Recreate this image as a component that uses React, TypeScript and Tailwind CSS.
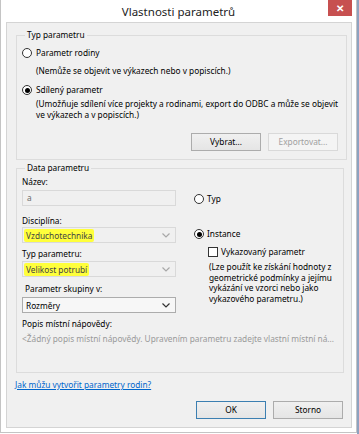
const Radio = ({ checked }: { checked?: boolean }) => (
  <span className="w-[10px] h-[10px] shrink-0 rounded-full border border-[#333] bg-white flex items-center justify-center">
    {checked && <span className="w-[5px] h-[5px] rounded-full bg-black" />}
  </span>
);

const Chevron = ({ color }: { color: string }) => (
  <svg width="8" height="5" viewBox="0 0 8 5" className="shrink-0">
    <path d="M0.5 0.5 L4 4 L7.5 0.5" fill="none" stroke={color} strokeWidth="1.2" />
  </svg>
);

const Select = ({ value, enabled, marked }: { value: string; enabled?: boolean; marked?: boolean }) => (
  <div
    className={`h-[16px] flex items-center justify-between pl-[1px] pr-[5px] border ${
      enabled ? "border-[#acacac] bg-[#f7f7f7] text-black" : "border-[#d9d9d9] bg-[#f0f0f0] text-[#444]"
    }`}
  >
    <span className={`leading-[13px] px-[2px] ${marked ? "bg-[#ffff3b] rounded-[2px]" : ""}`}>{value}</span>
    <Chevron color={enabled ? "#333" : "#a8a8a8"} />
  </div>
);

const Button = ({ label, disabled, primary }: { label: string; disabled?: boolean; primary?: boolean }) => (
  <div
    className={`w-[70px] h-[18px] flex items-center justify-center border ${
      disabled
        ? "border-[#d9d9d9] bg-[#f4f4f4] text-[#a0a0a0]"
        : primary
        ? "border-[#3c7fb1] bg-gradient-to-b from-[#f0f0f0] to-[#e5e5e5] text-black"
        : "border-[#acacac] bg-gradient-to-b from-[#f0f0f0] to-[#e5e5e5] text-black"
    }`}
  >
    {label}
  </div>
);

export default function App() {
  return (
    <div className="w-[359px] h-[434px] flex bg-white overflow-hidden font-['Noto_Sans',sans-serif] text-[8.3px] text-black">
      <div className="w-[357px] h-[433px] border-l border-r border-b border-[#c4c4c4] flex flex-col">
        {/* title bar */}
        <div className="relative h-[22px] flex items-center justify-center">
          <span className="text-[11.5px] leading-[14px] text-[#222] pt-[1px]">Vlastnosti parametrů</span>
          <div className="absolute right-[4px] top-0 w-[24px] h-[16px] bg-[#c75050] flex items-center justify-center text-white text-[10px] font-bold leading-none">
            ✕
          </div>
        </div>

        {/* client area */}
        <div className="ml-[5px] w-[346px] h-[406px] border border-[#d4d4d4] bg-[#f0f0f0] flex flex-col">
          <fieldset className="mt-[6px] ml-[9px] w-[328px] border border-[#dcdcdc] pl-[5px] pr-[8px] pb-[8px]">
            <legend className="ml-[3px] px-[2px] leading-[12px]">Typ parametru</legend>
            <div className="mt-[5px] h-[14px] flex items-center gap-[4px]">
              <Radio />
              <span>Parametr rodiny</span>
            </div>
            <div className="mt-[4px] h-[14px] flex items-center pl-[14px]">
              (Nemůže se objevit ve výkazech nebo v popiscích.)
            </div>
            <div className="mt-[5px] h-[14px] flex items-center gap-[4px]">
              <Radio checked />
              <span>Sdílený parametr</span>
            </div>
            <p className="mt-[1px] pl-[14px] leading-[11px] whitespace-nowrap">
              (Umožňuje sdílení více projekty a rodinami, export do ODBC a může se objevit
              <br />
              ve výkazech a v popiscích.)
            </p>
            <div className="mt-[13px] flex justify-end gap-[7px]">
              <Button label="Vybrat..." />
              <Button label="Exportovat..." disabled />
            </div>
          </fieldset>

          <fieldset className="mt-[2px] ml-[9px] w-[328px] border border-[#dcdcdc] pl-[5px] pr-[8px] pb-[27px]">
            <legend className="ml-[3px] px-[2px] leading-[12px]">Data parametru</legend>
            <div className="flex gap-[18px]">
              <div className="w-[154px] flex flex-col">
                <div className="mt-[2px] leading-[12px]">Název:</div>
                <div className="mt-[2px] h-[16px] border border-[#d9d9d9] bg-[#f0f0f0] text-[#6d6d6d] flex items-center pl-[4px]">
                  a
                </div>
                <div className="mt-[9px] leading-[12px]">Disciplína:</div>
                <Select value="Vzduchotechnika" marked />
                <div className="mt-[5px] leading-[12px]">Typ parametru:</div>
                <div className="mt-[1px]">
                  <Select value="Velikost potrubí" marked />
                </div>
                <div className="mt-[6px] pl-[3px] leading-[12px]">Parametr skupiny v:</div>
                <div className="mt-[2px]">
                  <Select value="Rozměry" enabled />
                </div>
              </div>
              <div className="flex flex-col">
                <div className="mt-[18px] h-[14px] flex items-center gap-[3px]">
                  <Radio />
                  <span>Typ</span>
                </div>
                <div className="mt-[21px] h-[14px] flex items-center gap-[3px]">
                  <Radio checked />
                  <span>Instance</span>
                </div>
                <div className="mt-[5px] ml-[14px] h-[12px] flex items-center gap-[3px]">
                  <span className="w-[10px] h-[10px] border border-[#333] bg-white" />
                  <span>Vykazovaný parametr</span>
                </div>
                <p className="mt-[4px] ml-[15px] leading-[10.5px] whitespace-nowrap">
                  (Lze použít ke získání hodnoty z
                  <br />
                  geometrické podmínky a jejímu
                  <br />
                  vykázání ve vzorci nebo jako
                  <br />
                  vykazového parametru.)
                </p>
              </div>
            </div>
            <div className="mt-[5px] leading-[12px]">Popis místní nápovědy:</div>
            <div className="mt-[3px] leading-[12px] text-[#9a9a9a] whitespace-nowrap">
              &lt;Žádný popis místní nápovědy. Upravením parametru zadejte vlastní místní ná...
            </div>
          </fieldset>

          <div className="mt-[6px] ml-[8px] leading-[12px]">
            <span className="text-[#0066cc] underline">Jak můžu vytvořit parametry rodin?</span>
          </div>
          <div className="mt-[10px] pr-[8px] flex justify-end gap-[7px]">
            <Button label="OK" primary />
            <Button label="Storno" />
          </div>
        </div>
      </div>
      <div className="w-[2px] h-full bg-[#8ea2c0]" />
    </div>
  );
}
